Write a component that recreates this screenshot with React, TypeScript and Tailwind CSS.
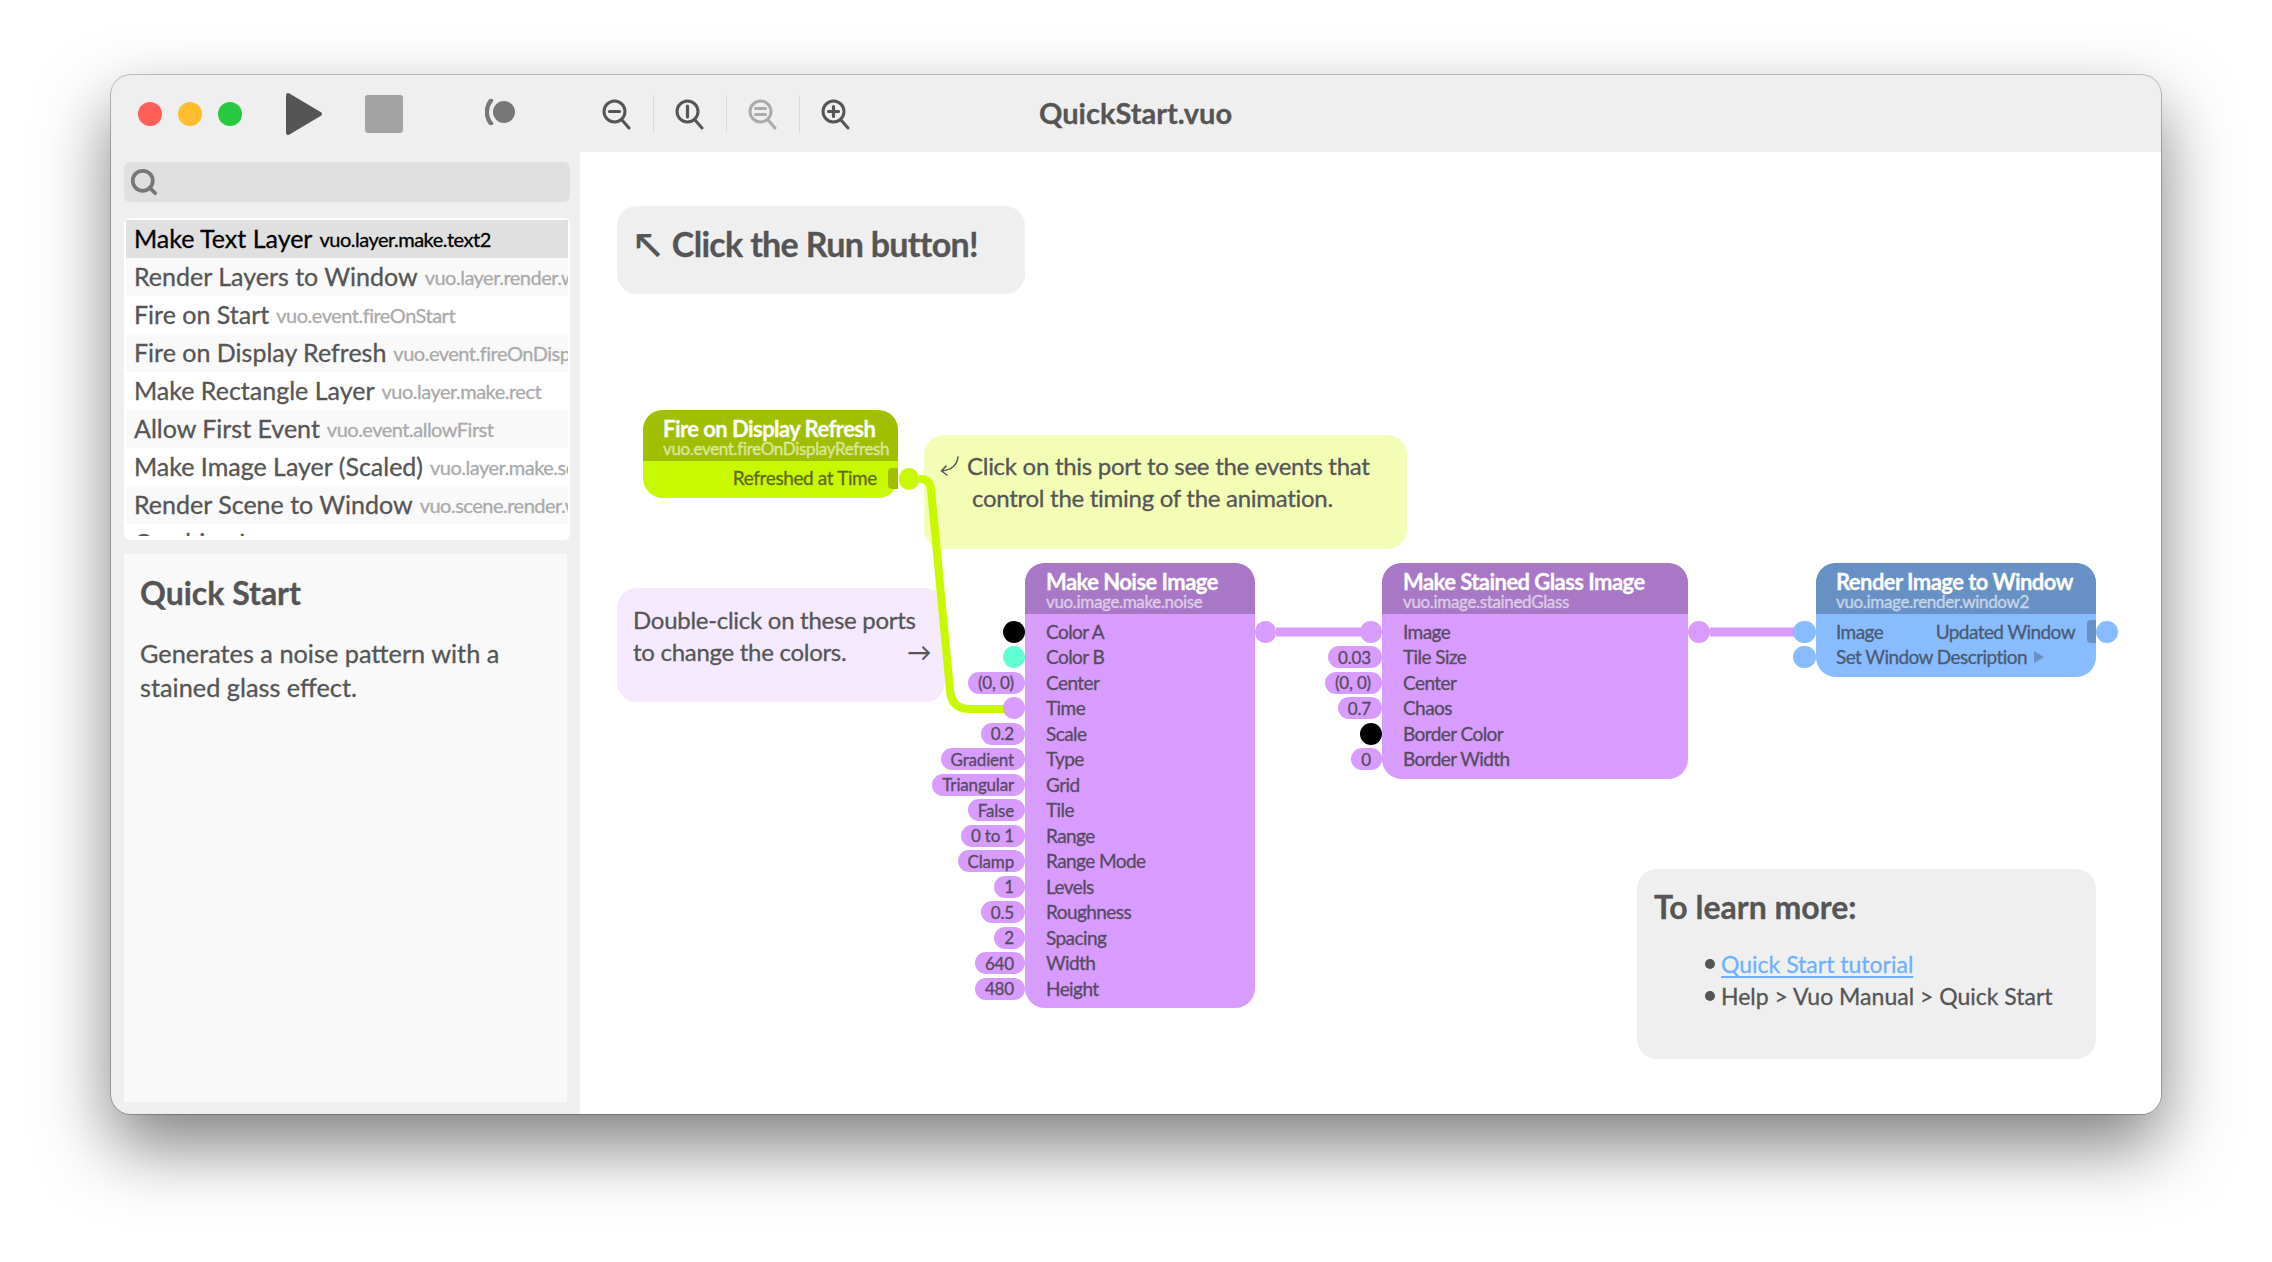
import { Search } from "lucide-react";

const font = "font-['Lato','Open_Sans',sans-serif]";

const nodes = [
  { name: "Make Text Layer", cls: "vuo.layer.make.text2" },
  { name: "Render Layers to Window", cls: "vuo.layer.render.window2" },
  { name: "Fire on Start", cls: "vuo.event.fireOnStart" },
  { name: "Fire on Display Refresh", cls: "vuo.event.fireOnDisplayRefresh" },
  { name: "Make Rectangle Layer", cls: "vuo.layer.make.rect" },
  { name: "Allow First Event", cls: "vuo.event.allowFirst" },
  { name: "Make Image Layer (Scaled)", cls: "vuo.layer.make.scaled" },
  { name: "Render Scene to Window", cls: "vuo.scene.render.window2" },
  { name: "Combine Layers", cls: "vuo.layer.combine" },
];

type Port = { label: string; value?: string; dot?: "black" | "mint" | "plain" };

const noisePorts: Port[] = [
  { label: "Color A", dot: "black" },
  { label: "Color B", dot: "mint" },
  { label: "Center", value: "(0, 0)" },
  { label: "Time", dot: "plain" },
  { label: "Scale", value: "0.2" },
  { label: "Type", value: "Gradient" },
  { label: "Grid", value: "Triangular" },
  { label: "Tile", value: "False" },
  { label: "Range", value: "0 to 1" },
  { label: "Range Mode", value: "Clamp" },
  { label: "Levels", value: "1" },
  { label: "Roughness", value: "0.5" },
  { label: "Spacing", value: "2" },
  { label: "Width", value: "640" },
  { label: "Height", value: "480" },
];

const glassPorts: Port[] = [
  { label: "Image", dot: "plain" },
  { label: "Tile Size", value: "0.03" },
  { label: "Center", value: "(0, 0)" },
  { label: "Chaos", value: "0.7" },
  { label: "Border Color", dot: "black" },
  { label: "Border Width", value: "0" },
];

function ZoomIcon({ kind, faded }: { kind: "minus" | "one" | "equal" | "plus"; faded?: boolean }) {
  return (
    <svg width="32" height="32" viewBox="0 0 32 32" fill="none" stroke={faded ? "#ababab" : "#555555"} strokeWidth="3" strokeLinecap="round">
      <circle cx="13.5" cy="13.5" r="10.5" />
      <path d="M21 22l7 8" />
      {kind === "minus" && <path d="M8.5 13.5h10" strokeWidth="3.2" />}
      {kind === "one" && <path d="M13.5 8v11" strokeWidth="3.2" />}
      {kind === "equal" && <path d="M8.5 10.5h10M8.5 16.5h10" strokeWidth="3.2" />}
      {kind === "plus" && <path d="M8.5 13.5h10M13.5 8.5v10" strokeWidth="3.2" />}
    </svg>
  );
}

function Toolbar() {
  return (
    <div className="relative flex h-[77px] shrink-0 items-center">
      <div className="ml-[27px] flex gap-4">
        <div className="h-6 w-6 rounded-full bg-[#ff5f57]" />
        <div className="h-6 w-6 rounded-full bg-[#febc2e]" />
        <div className="h-6 w-6 rounded-full bg-[#28c840]" />
      </div>
      <svg className="ml-[43px]" width="38" height="44" viewBox="0 0 38 44">
        <path d="M3 3L35 22L3 41Z" fill="#555555" stroke="#555555" strokeWidth="4" strokeLinejoin="round" />
      </svg>
      <div className="ml-[42px] h-[38px] w-[38px] rounded-[3px] bg-[#a3a3a3]" />
      <svg className="ml-[82px] -translate-y-[2px]" width="32" height="26" viewBox="0 0 32 26">
        <circle cx="19" cy="13" r="11" fill="#777777" />
        <path d="M6 1.5C0.5 8 0.5 18 6 24.5" fill="none" stroke="#777777" strokeWidth="4.4" strokeLinecap="round" />
      </svg>
      <div className="ml-[84px] flex items-center">
        <ZoomIcon kind="minus" />
        <div className="mx-[20px] h-[38px] w-px bg-[#dcdcdc]" />
        <ZoomIcon kind="one" />
        <div className="mx-[20px] h-[38px] w-px bg-[#dcdcdc]" />
        <ZoomIcon kind="equal" faded />
        <div className="mx-[20px] h-[38px] w-px bg-[#dcdcdc]" />
        <ZoomIcon kind="plus" />
      </div>
      <div className="absolute left-[928px] top-[21px] text-[29px] leading-[34px] font-bold text-[#555555]">QuickStart.vuo</div>
    </div>
  );
}

function Sidebar() {
  return (
    <div className="flex w-[469px] shrink-0 flex-col px-[13px] pb-[12px] pt-[10px]">
      <div className="flex h-10 w-[446px] items-center rounded-md bg-[#e0e0e0] pl-[5px]">
        <Search size={30} strokeWidth={3} className="text-[#777777]" />
      </div>
      <div className="mt-4 h-[322px] w-[446px] overflow-hidden rounded-md bg-white p-[2px]">
        <div className="h-[316px] overflow-hidden">
          {nodes.map((n, i) => (
            <div
              key={n.cls}
              className={`flex h-[38px] items-center gap-[7px] whitespace-nowrap pl-[8px] ${
                i === 0 ? "bg-[#e0e0e0]" : i % 2 === 1 ? "bg-[#f9f9f9]" : "bg-white"
              }`}
            >
              <span className={`text-[25px] ${i === 0 ? "text-black" : "text-[#555555]"}`}>{n.name}</span>
              <span className={`text-[20px] tracking-[-0.025em] ${i === 0 ? "text-black" : "text-[#aaaaaa]"}`}>{n.cls}</span>
            </div>
          ))}
        </div>
      </div>
      <div className="mt-[14px] flex-1 bg-[#f9f9f9] px-4 pt-[19px]">
        <h1 className="text-[32px] leading-10 font-bold text-[#555555]">Quick Start</h1>
        <p className="mt-[23px] w-[370px] text-[25.3px] leading-[34px] text-[#555555]">
          Generates a noise pattern with a stained glass effect.
        </p>
      </div>
    </div>
  );
}

function PortTag({ port, tone }: { port: Port; tone: string }) {
  if (port.dot === "black") return <div className="absolute right-full top-[1.75px] h-[22px] w-[22px] rounded-full bg-black" />;
  if (port.dot === "mint") return <div className="absolute right-full top-[1.75px] h-[22px] w-[22px] rounded-full bg-[#62ffd2]" />;
  if (port.dot === "plain") return <div className={`absolute right-full top-[1.75px] h-[22px] w-[22px] rounded-full ${tone}`} />;
  return (
    <div className={`absolute right-full top-[1.75px] flex h-[22px] items-center whitespace-nowrap rounded-full pl-[10px] pr-[11px] text-[17px] tracking-[-0.01em] text-[#574a60] ${tone}`}>
      {port.value}
    </div>
  );
}

function PurpleNode({ title, sub, ports, className }: { title: string; sub: string; ports: Port[]; className: string }) {
  return (
    <div className={`absolute rounded-[20px] bg-[#d89cff] ${className}`}>
      <div className="h-[51px] rounded-t-[20px] bg-[#a877c5] pl-[21px] pt-[6px]">
        <div className="text-[22px] leading-[25px] font-bold tracking-[-0.025em] text-white">{title}</div>
        <div className="text-[17px] leading-[16px] tracking-[-0.02em] text-white/55">{sub}</div>
      </div>
      <div className="pt-[5px]">
        {ports.map((p) => (
          <div key={p.label} className="relative flex h-[25.5px] items-center pl-[21px] text-[19px] tracking-[-0.03em] text-[#574a60]">
            <PortTag port={p} tone="bg-[#d89cff]" />
            {p.label}
          </div>
        ))}
      </div>
    </div>
  );
}

function Canvas() {
  return (
    <div className="relative flex-1 overflow-hidden bg-white text-[#555555]">
      <div className="absolute left-[37px] top-[54px] flex h-[88px] w-[408px] items-center gap-[12px] rounded-[20px] bg-[#efefef] pb-[14px] pl-[18px] text-[34px] font-bold tracking-[-0.02em]">
        <span>↖</span>
        <span>Click the Run button!</span>
      </div>

      <div className="absolute left-[344px] top-[283px] h-[114px] w-[483px] rounded-[20px] bg-[#f3fdb6] pl-[16px] pt-[15px] text-[24px] leading-[32px] tracking-[-0.28px]">
        <div className="flex items-center gap-[8px]">
          <svg width="19" height="20" viewBox="0 0 19 20" fill="none" stroke="#555555" strokeWidth="1.5" strokeLinecap="round">
            <path d="M18 1C17 9 11 14 2 15M6 10L1.5 15L7 19" />
          </svg>
          <span>Click on this port to see the events that</span>
        </div>
        <div className="-ml-[16px] pl-[48px]">control the timing of the animation.</div>
      </div>

      <div className="absolute left-[37px] top-[436px] h-[114px] w-[328px] rounded-[20px] bg-[#f5e9fe] pl-[16px] pt-[16px] text-[24px] leading-[32px] tracking-[-0.28px]">
        <div>Double-click on these ports</div>
        <div className="flex justify-between pr-[14px]">
          <span>to change the colors.</span>
          <span>→</span>
        </div>
      </div>

      {/* event cable from the fire port down to Time */}
      <svg className="absolute inset-0" width="1580" height="962" fill="none">
        <path d="M339 327H341Q350 327 351 338L370 538Q371 557 390 557H425" stroke="#c9f900" strokeWidth="8" />
        <path d="M696 480H782" stroke="#d89cff" strokeWidth="9" />
        <path d="M1130 480H1215" stroke="#d89cff" strokeWidth="9" />
      </svg>

      {/* trigger node */}
      <div className="absolute left-[63px] top-[258px] h-[88px] w-[255px] rounded-[20px] bg-[#c9f900]">
        <div className="h-[51px] rounded-t-[20px] bg-[#9fbf00] pl-[20px] pt-[6px]">
          <div className="text-[22px] leading-[25px] font-bold tracking-[-0.025em] text-white">Fire on Display Refresh</div>
          <div className="whitespace-nowrap text-[17px] leading-[16px] tracking-[-0.02em] text-white/55">vuo.event.fireOnDisplayRefresh</div>
        </div>
        <div className="pr-[21px] pt-[4px] text-right text-[19px] leading-[25px] tracking-[-0.02em] text-[#5c6b17]">Refreshed at Time</div>
        <div className="absolute right-0 top-[58px] h-[21px] w-[10px] rounded-l-[4px] bg-[#9fbf00]" />
        <div className="absolute left-full top-[58px] ml-px h-[22px] w-[20px] rounded-full bg-[#c9f900]" />
      </div>

      <PurpleNode title="Make Noise Image" sub="vuo.image.make.noise" ports={noisePorts} className="left-[445px] top-[411px] h-[445px] w-[230px]" />
      <div className="absolute left-[675px] top-[469px] h-[22px] w-[21px] rounded-full bg-[#d89cff]" />

      <PurpleNode title="Make Stained Glass Image" sub="vuo.image.stainedGlass" ports={glassPorts} className="left-[802px] top-[411px] h-[216px] w-[306px]" />
      <div className="absolute left-[1108px] top-[469px] h-[22px] w-[22px] rounded-full bg-[#d89cff]" />

      {/* render node */}
      <div className="absolute left-[1236px] top-[411px] h-[114px] w-[280px] rounded-[20px] bg-[#88bbff]">
        <div className="h-[51px] rounded-t-[20px] bg-[#6790c5] pl-[20px] pt-[6px]">
          <div className="text-[22px] leading-[25px] font-bold tracking-[-0.025em] text-white">Render Image to Window</div>
          <div className="text-[17px] leading-[16px] tracking-[-0.02em] text-white/55">vuo.image.render.window2</div>
        </div>
        <div className="pt-[5px] text-[19px] tracking-[-0.03em] text-[#4b5a70]">
          <div className="relative flex h-[25.5px] items-center justify-between pl-[20px] pr-[21px]">
            <div className="absolute right-full top-[1.75px] h-[22px] w-[23px] rounded-full bg-[#88bbff]" />
            <span>Image</span>
            <span>Updated Window</span>
            <div className="absolute right-0 top-[1px] h-[23px] w-[9px] rounded-l-[4px] bg-[#6790c5]" />
            <div className="absolute left-full top-[1.75px] h-[22px] w-[22px] rounded-full bg-[#88bbff]" />
          </div>
          <div className="relative flex h-[25.5px] items-center gap-[6px] whitespace-nowrap pl-[20px]">
            <div className="absolute right-full top-[1.75px] h-[22px] w-[23px] rounded-full bg-[#88bbff]" />
            <span>Set Window Description</span>
            <svg width="12" height="14" viewBox="0 0 12 14">
              <path d="M1 1L11 7L1 13Z" fill="#6790c5" />
            </svg>
          </div>
        </div>
      </div>

      <div className="absolute left-[1057px] top-[717px] h-[190px] w-[459px] rounded-[20px] bg-[#efefef] pl-[17px] pt-[18px]">
        <h2 className="text-[32px] leading-10 font-bold">To learn more:</h2>
        <ul className="ml-[51px] mt-[21px] text-[23px] leading-[32px]">
          <li className="flex items-center gap-[6px]">
            <span className="h-[10px] w-[10px] rounded-full bg-[#555555]" />
            <a className="text-[#6eb0ff] underline underline-offset-[3px]" href="#">Quick Start tutorial</a>
          </li>
          <li className="flex items-center gap-[6px]">
            <span className="h-[10px] w-[10px] rounded-full bg-[#555555]" />
            <span>Help &gt; Vuo Manual &gt; Quick Start</span>
          </li>
        </ul>
      </div>
    </div>
  );
}

export default function App() {
  return (
    <div className={`h-[1262px] w-[2272px] overflow-hidden bg-white pl-[111px] pt-[75px] [-webkit-text-stroke:0.3px] ${font}`}>
      <div className="flex h-[1039px] w-[2050px] flex-col overflow-hidden rounded-[20px] bg-[#efefef] shadow-[0_32px_70px_0_rgba(0,0,0,0.5),0_0_0_1px_rgba(0,0,0,0.22)]">
        <Toolbar />
        <div className="flex min-h-0 flex-1">
          <Sidebar />
          <Canvas />
        </div>
      </div>
    </div>
  );
}
